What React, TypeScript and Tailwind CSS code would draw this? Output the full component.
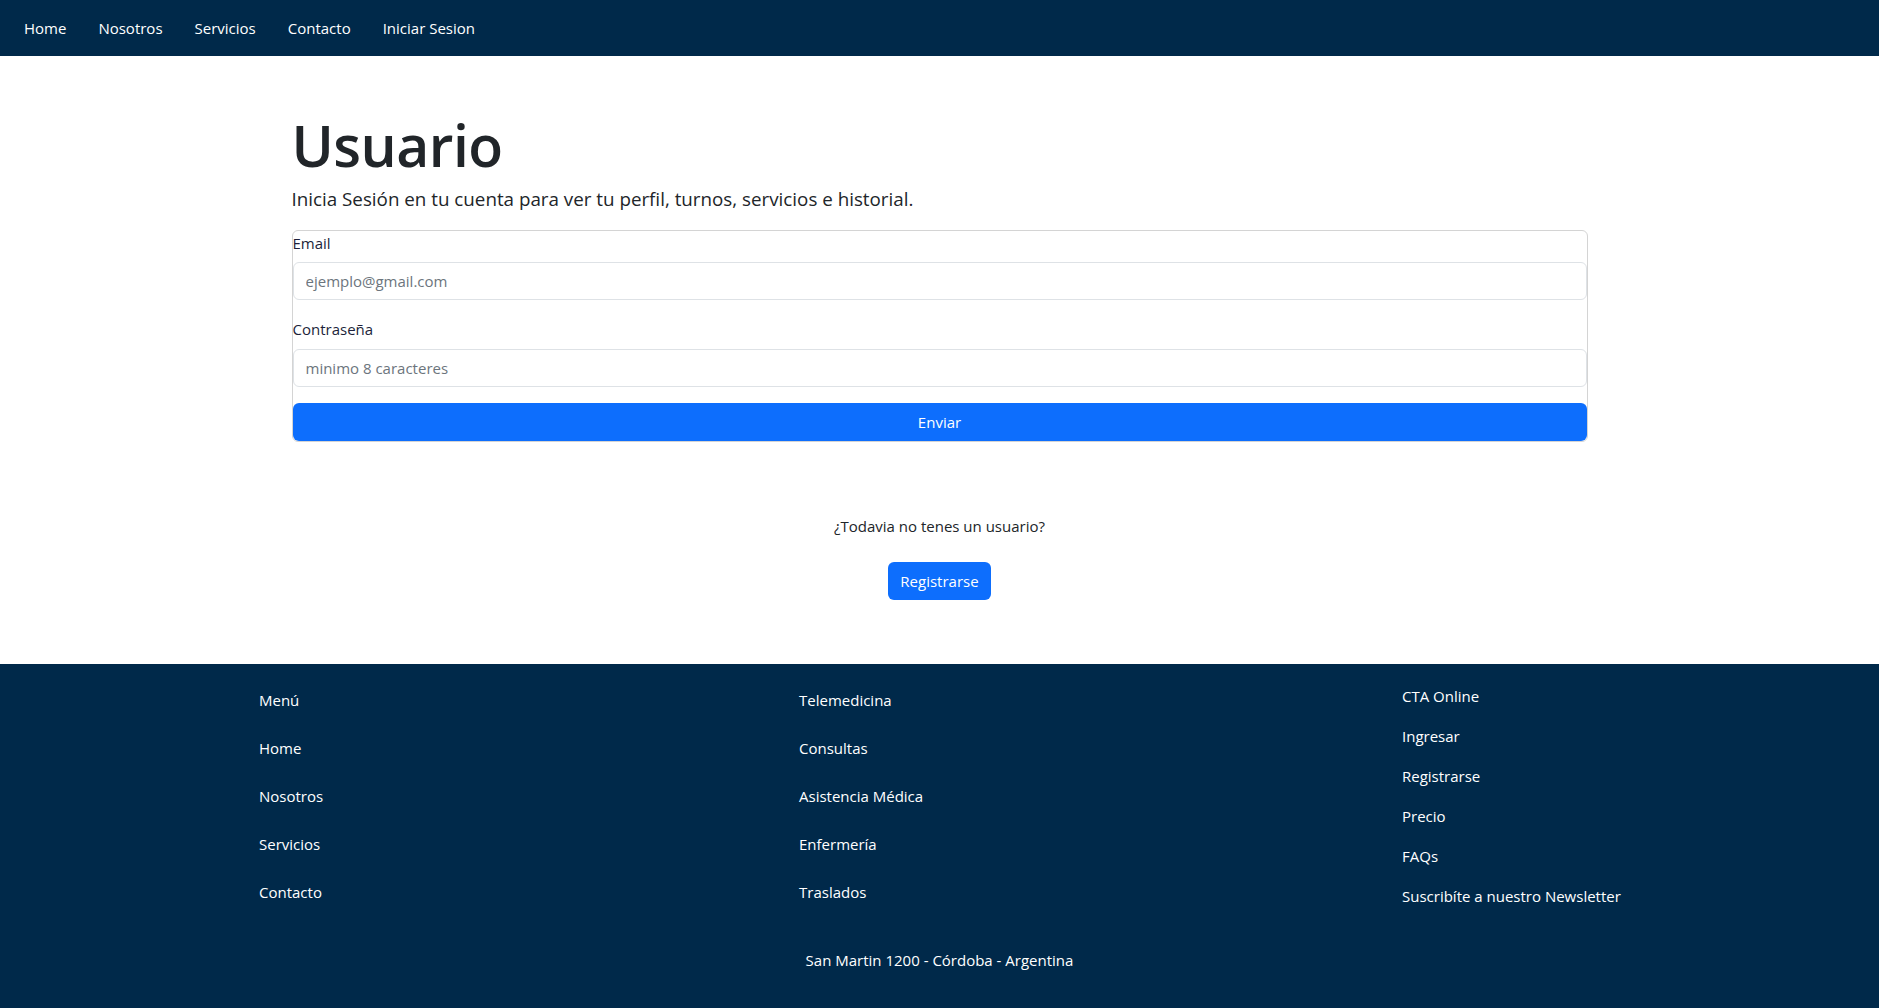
import React from "react";

const navLinks = ["Home", "Nosotros", "Servicios", "Contacto", "Iniciar Sesion"];
const menuCol = ["Menú", "Home", "Nosotros", "Servicios", "Contacto"];
const serviciosCol = ["Telemedicina", "Consultas", "Asistencia Médica", "Enfermería", "Traslados"];
const ctaCol = ["CTA Online", "Ingresar", "Registrarse", "Precio", "FAQs", "Suscribíte a nuestro Newsletter"];

const font = { fontFamily: '"Open Sans", "Noto Sans", sans-serif' };

export default function App() {
  return (
    <div className="min-h-screen bg-white text-[#212529]" style={font}>
      {/* Navbar */}
      <nav className="flex h-[56px] items-center gap-8 bg-[#00294a] px-6">
        {navLinks.map((link) => (
          <a key={link} href="#" className="text-[15px] text-white">
            {link}
          </a>
        ))}
      </nav>

      {/* Main */}
      <main className="mx-auto w-[1296px] pb-[64px] pt-[55px]">
        <h1 className="text-[57px] font-semibold leading-[1.2] tracking-[-0.5px]">Usuario</h1>
        <p className="mt-[6px] text-[18.8px] leading-[28px]">
          Inicia Sesión en tu cuenta para ver tu perfil, turnos, servicios e historial.
        </p>

        <form className="mt-[17px] rounded-[6px] border border-[#d4d4d4]">
          <label className="block text-[15px] leading-[24px] text-[#1c1f3a]">Email</label>
          <input
            type="email"
            placeholder="ejemplo@gmail.com"
            className="mt-[7px] block h-[38px] w-full rounded-[6px] border border-[#dee2e6] px-3 text-[15px] placeholder:text-[#6c757d] outline-none"
          />
          <label className="mt-[17px] block text-[15px] leading-[24px] text-[#1c1f3a]">Contraseña</label>
          <input
            type="password"
            placeholder="minimo 8 caracteres"
            className="mt-[8px] block h-[38px] w-full rounded-[6px] border border-[#dee2e6] px-3 text-[15px] placeholder:text-[#6c757d] outline-none"
          />
          <button
            type="button"
            className="mt-[16px] block h-[38px] w-full rounded-[6px] bg-[#0d6efd] text-[15px] text-white"
          >
            Enviar
          </button>
        </form>

        <div className="mt-[72px] flex flex-col items-center">
          <p className="text-[15px] leading-[24px]">¿Todavia no tenes un usuario?</p>
          <button
            type="button"
            className="mt-[24px] h-[38px] rounded-[6px] bg-[#0d6efd] px-3 text-[15px] text-white"
          >
            Registrarse
          </button>
        </div>
      </main>

      {/* Footer */}
      <footer className="h-[344px] bg-[#00294a] text-white">
        <div className="flex pl-[259px] pt-[24px]">
          <ul className="flex w-[540px] flex-col gap-[24px]">
            {menuCol.map((item) => (
              <li key={item} className="text-[15px] leading-[24px]">
                {item}
              </li>
            ))}
          </ul>
          <ul className="flex w-[603px] flex-col gap-[24px]">
            {serviciosCol.map((item) => (
              <li key={item} className="text-[15px] leading-[24px]">
                {item}
              </li>
            ))}
          </ul>
          <ul className="-mt-[4px] flex flex-col gap-[16px]">
            {ctaCol.map((item) => (
              <li key={item} className="text-[15px] leading-[24px]">
                {item}
              </li>
            ))}
          </ul>
        </div>
        <p className="mt-[40px] text-center text-[15px] leading-[24px]">San Martin 1200 - Córdoba - Argentina</p>
      </footer>
    </div>
  );
}
